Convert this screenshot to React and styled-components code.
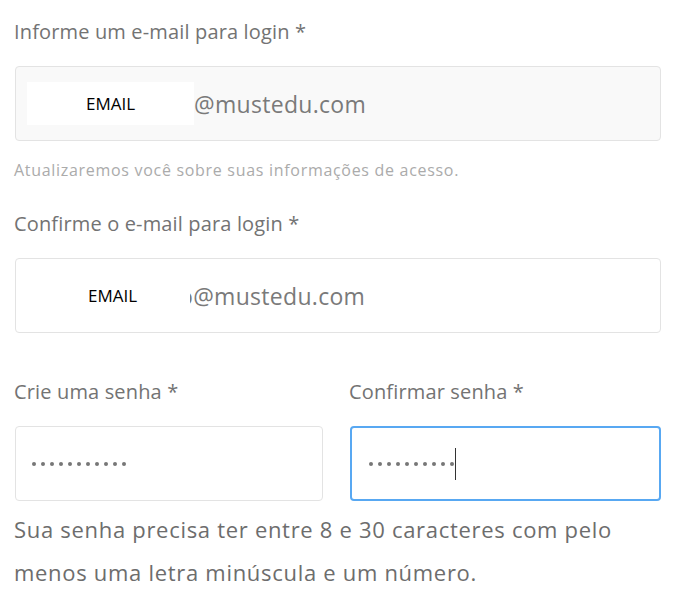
import React from 'react';
import styled, { createGlobalStyle } from 'styled-components';

const GlobalStyle = createGlobalStyle`
  html, body {
    margin: 0;
    padding: 0;
    background: #fff;
  }
  body {
    font-family: "Open Sans", "Noto Sans", sans-serif;
  }
`;

// Styled Components
const Form = styled.div`
  width: 646px;
  padding: 20px 0 0 15px;
`;

const Label = styled.div`
  font-size: 20px;
  line-height: 24px;
  letter-spacing: 0.15px;
  color: #737373;
  white-space: nowrap;
  margin: ${(p) => p.$top || 0}px 0 22px -1px;
`;

const Box = styled.div`
  box-sizing: border-box;
  height: 75px;
  display: flex;
  align-items: center;
  padding-left: ${(p) => p.$pad || 11}px;
  border: ${(p) => (p.$focus ? '2px solid #58a8f2' : '1px solid #e3e3e3')};
  border-radius: 4px;
  background: ${(p) => (p.$muted ? '#f9f9f9' : '#fff')};
`;

const Redact = styled.div`
  position: relative;
  z-index: 1;
  width: ${(p) => p.$w}px;
  height: 43px;
  margin-left: ${(p) => p.$left || 0}px;
  background: #fff;
  display: flex;
  align-items: center;
  justify-content: center;
  font-size: 17px;
  color: #000;
`;

const Domain = styled.span`
  font-size: 23px;
  letter-spacing: 0.3px;
  color: #7a7a7a;
  margin-left: ${(p) => p.$shift || 0}px;
`;

const Hint = styled.div`
  font-size: 16px;
  line-height: 18px;
  letter-spacing: 0.7px;
  color: #ababab;
  white-space: nowrap;
  margin: 20px 0 0 -1px;
`;

const Row = styled.div`
  display: grid;
  grid-template-columns: 308px 311px;
  column-gap: 27px;
  margin-top: 47px;
`;

const Dots = styled.div`
  display: flex;
  align-items: center;
  gap: 5px;
`;

const Dot = styled.span`
  width: 4px;
  height: 4px;
  border-radius: 50%;
  background: #777;
`;

const Caret = styled.span`
  width: 1px;
  height: 32px;
  margin-left: 1px;
  background: #333;
`;

const Note = styled.p`
  margin: 7px 0 0 -1px;
  font-size: 22px;
  line-height: 43px;
  letter-spacing: 0.7px;
  color: #6d6d6d;
  white-space: nowrap;
`;

const Password = ({ count, focus }) => (
  <Box $focus={focus} $pad={focus ? 17 : 16}>
    <Dots>
      {Array.from({ length: count }).map((_, i) => (
        <Dot key={i} />
      ))}
    </Dots>
    {focus && <Caret />}
  </Box>
);

const App = () => (
  <>
    <GlobalStyle />
    <Form>
      <Label>Informe um e-mail para login *</Label>
      <Box $muted>
        <Redact $w={167}>EMAIL</Redact>
        <Domain>@mustedu.com</Domain>
      </Box>
      <Hint>Atualizaremos você sobre suas informações de acesso.</Hint>

      <Label $top={33}>Confirme o e-mail para login *</Label>
      <Box>
        <Redact $w={155} $left={8}>EMAIL</Redact>
        <Domain $shift={-11}>o@mustedu.com</Domain>
      </Box>

      <Row>
        <div>
          <Label>Crie uma senha *</Label>
          <Password count={11} />
        </div>
        <div>
          <Label>Confirmar senha *</Label>
          <Password count={10} focus />
        </div>
      </Row>

      <Note>
        Sua senha precisa ter entre 8 e 30 caracteres com pelo
        <br />
        menos uma letra minúscula e um número.
      </Note>
    </Form>
  </>
);

export default App;
